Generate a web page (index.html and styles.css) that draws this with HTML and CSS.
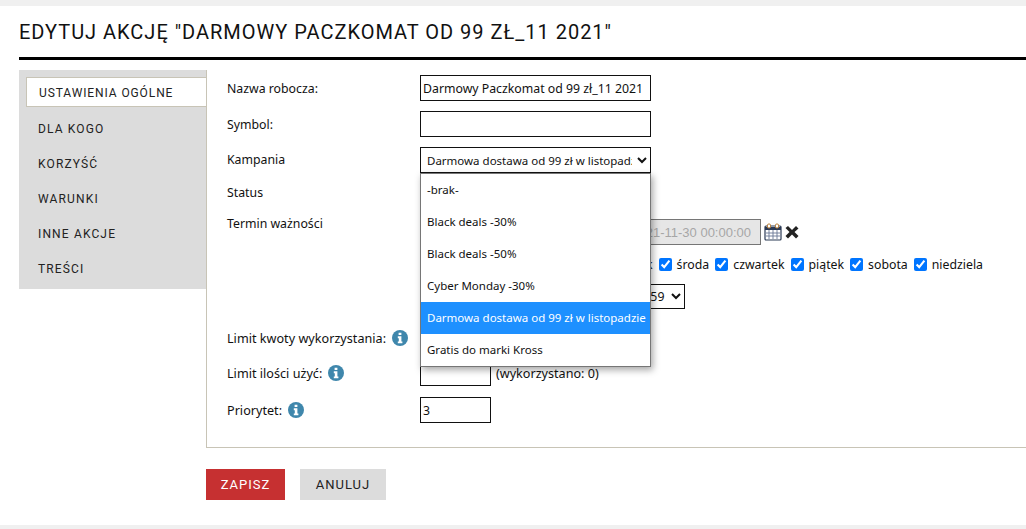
FILE: index.html
```html
<!DOCTYPE html>
<html lang="pl">
<head>
<meta charset="utf-8">
<title>Edytuj akcję</title>
<link rel="stylesheet" href="styles.css">
</head>
<body>
<div class="page">
  <h1 class="title">EDYTUJ AKCJĘ "DARMOWY PACZKOMAT OD 99 ZŁ_11 2021"</h1>
  <div class="editor">
    <nav class="tabs">
      <a class="tab tab-active">USTAWIENIA OGÓLNE</a>
      <a class="tab">DLA KOGO</a>
      <a class="tab">KORZYŚĆ</a>
      <a class="tab">WARUNKI</a>
      <a class="tab">INNE AKCJE</a>
      <a class="tab">TREŚCI</a>
    </nav>
    <form class="panel">
      <div class="row"><label class="lbl">Nazwa robocza:</label><input class="field wide" value="Darmowy Paczkomat od 99 zł_11 2021"></div>
      <div class="row"><label class="lbl">Symbol:</label><input class="field wide"></div>
      <div class="row campaign">
        <label class="lbl">Kampania</label>
        <div class="select-wrap">
          <select class="field wide sel"><option>Darmowa dostawa od 99 zł w listopadzie</option></select>
          <ul class="dropdown">
            <li>-brak-</li>
            <li>Black deals -30%</li>
            <li>Black deals -50%</li>
            <li>Cyber Monday -30%</li>
            <li class="selected">Darmowa dostawa od 99 zł w listopadzie</li>
            <li>Gratis do marki Kross</li>
          </ul>
        </div>
      </div>
      <div class="row status"><label class="lbl">Status</label></div>
      <div class="row term">
        <label class="lbl">Termin ważności</label>
        <div class="term-fields">
          <input class="date" disabled value="2021-11-01 00:00:00">
          <input class="date" disabled value="2021-11-30 00:00:00">
          <svg class="cal" viewBox="0 0 18 18" width="18" height="18"><rect x="1" y="3" width="16" height="14" rx="1" fill="#fff" stroke="#2b3a55" stroke-width="1.2"/><path d="M1 4h16v3H1z" fill="#2b3a55"/><path d="M2 10h14M2 13h14M5 7v9M9 7v9M13 7v9" stroke="#6a7694" stroke-width=".9"/><rect x="3.500" y="1" width="3" height="4" rx="1.2" fill="#fff" stroke="#b5762a"/><rect x="11.500" y="1" width="3" height="4" rx="1.2" fill="#fff" stroke="#b5762a"/></svg>
          <svg class="del" viewBox="0 0 14 14" width="14" height="14"><path d="M3 1 7 5l4-4 2.500 2.500L9.500 7l4 4-2.500 2.500L7 9.500l-4 4L.5 11l4-4-4-4z" fill="#222"/></svg>
        </div>
      </div>
      <div class="row days">
        <span class="day"><input type="checkbox" checked>poniedziałek</span>
        <span class="day"><input type="checkbox" checked>wtorek</span>
        <span class="day"><input type="checkbox" checked>środa</span>
        <span class="day"><input type="checkbox" checked>czwartek</span>
        <span class="day"><input type="checkbox" checked>piątek</span>
        <span class="day"><input type="checkbox" checked>sobota</span>
        <span class="day"><input type="checkbox" checked>niedziela</span>
      </div>
      <div class="row hours"><select class="field time"><option>23:59</option></select></div>
      <div class="row limit first">
        <label class="lbl">Limit kwoty wykorzystania: <svg class="info" viewBox="0 0 16 16" width="16" height="16"><circle cx="8" cy="8" r="8" fill="#3f87ac"/><path d="M6.600 2.700h2.800v2.300H6.600zM5.800 6.300h3.600v5.100h1v1.900H5.800v-1.900h1V8.200h-1z" fill="#fff"/></svg></label>
        <input class="field narrow">
      </div>
      <div class="row limit">
        <label class="lbl">Limit ilości użyć: <svg class="info" viewBox="0 0 16 16" width="16" height="16"><circle cx="8" cy="8" r="8" fill="#3f87ac"/><path d="M6.600 2.700h2.800v2.300H6.600zM5.800 6.300h3.600v5.100h1v1.900H5.800v-1.900h1V8.200h-1z" fill="#fff"/></svg></label>
        <input class="field narrow"><span class="used">(wykorzystano: 0)</span>
      </div>
      <div class="row limit">
        <label class="lbl">Priorytet: <svg class="info" viewBox="0 0 16 16" width="16" height="16"><circle cx="8" cy="8" r="8" fill="#3f87ac"/><path d="M6.600 2.700h2.800v2.300H6.600zM5.800 6.300h3.600v5.100h1v1.900H5.800v-1.900h1V8.200h-1z" fill="#fff"/></svg></label>
        <input class="field narrow" value="3">
      </div>
    </form>
  </div>
  <div class="actions">
    <button class="btn btn-save" type="button">ZAPISZ</button>
    <button class="btn btn-cancel" type="button">ANULUJ</button>
  </div>
</div>
</body>
</html>
```
FILE: styles.css
```css
html, body { margin: 0; padding: 0; height: 100%; overflow: hidden; }
body { background: #fff; font-family: "Noto Sans", sans-serif; font-size: 12.3px; color: #111; }
.page { height: 519px; border-top: 6px solid #f0f0f0; border-bottom: 4px solid #f0f0f0; padding-left: 19px; overflow: hidden; }
.title { margin: 0; height: 51px; border-bottom: 3px solid #000; font: 400 20px/53px Roboto, sans-serif; letter-spacing: .99px; color: #111; white-space: nowrap; }
.editor { display: flex; margin-top: 10px; align-items: flex-start; width: 1100px; }
.tabs { width: 187px; height: 219px; flex: none; background: #dcdcdc; padding-top: 7px; box-sizing: border-box; display: flex; flex-direction: column; }
.tab { height: 35px; padding-left: 19px; font: 400 12px/32px Roboto, sans-serif; letter-spacing: 1.15px; color: #222; }
.tab-active { height: 28px; margin: 0 0 6px 7px; padding-left: 12px; background: #fff; border: 1px solid #c8c4b6; border-right: 0; letter-spacing: .9px; line-height: 30px; }
.panel { flex: 1; height: 378px; box-sizing: border-box; border-left: 1px solid #c8c4b6; border-bottom: 1px solid #c8c4b6; padding: 5px 0 0 20px; }
.row { display: flex; align-items: center; margin-bottom: 10px; height: 26px; white-space: nowrap; }
.lbl { width: 193px; flex: none; position: relative; display: flex; align-items: center; gap: 6px; }
.field { box-sizing: border-box; height: 26px; border: 1px solid #111; background: #fff; font: 12.3px "Noto Sans", sans-serif; color: #111; padding: 0 2px; border-radius: 0; }
.wide { width: 231px; }
.narrow { width: 71px; flex: none; }
.sel { padding: 0 2px; display: block; font-size: 11.5px; }
.select-wrap { position: relative; }
.campaign .lbl { top: -1px; }
.dropdown { position: absolute; z-index: 5; left: 0; top: 26px; width: 231px; box-sizing: border-box; margin: 0; padding: 0; list-style: none; background: #fff; border: 1px solid #767676; box-shadow: 2px 3px 7px rgba(0,0,0,.35); font-size: 11.5px; }
.dropdown li { height: 32px; line-height: 32px; padding-left: 6px; white-space: nowrap; overflow: hidden; }
.dropdown .selected { background: #1e90ff; color: #fff; }
.status { height: 18px; margin-bottom: 18px; }
.term { height: 26px; margin-bottom: 7px; align-items: flex-start; }
.term .lbl { top: -4px; }
.term-fields { display: flex; align-items: center; gap: 41px; }
.date { box-sizing: border-box; width: 150px; height: 26px; border: 1px solid #767676; background: #e6e6e6; color: #a6a6a6; font: 13px "Liberation Sans", sans-serif; padding: 0 9px 0 4px; text-align: right; }
.cal { margin-left: -38px; }
.del { margin-left: -38px; }
.days { height: 24px; margin-bottom: 8px; width: 762px; justify-content: flex-end; }
.day { display: inline-flex; align-items: center; margin-right: 6px; }
.day input { margin: 0 5px 0 0; width: 13px; height: 13px; }
.hours { height: 25px; margin-bottom: 16px; }
.time { width: 62px; height: 25px; margin-left: 396px; padding-left: 5px; }
.limit { font-size: 12.6px; }
.limit .lbl { gap: 6px; letter-spacing: .02px; }
.first { margin-bottom: 9px; }
.limit:not(.first) { margin-bottom: 11px; }
.used { margin-left: 5px; }
.info { flex: none; }
.actions { display: flex; gap: 15px; margin: 21px 0 0 187px; }
.btn { height: 31px; border: 0; font: 400 13px Roboto, sans-serif; letter-spacing: 1px; padding: 0; }
.btn-save { background: #c63031; color: #fff; width: 79px; }
.btn-cancel { background: #dcdcdc; color: #222; width: 86px; }
```
